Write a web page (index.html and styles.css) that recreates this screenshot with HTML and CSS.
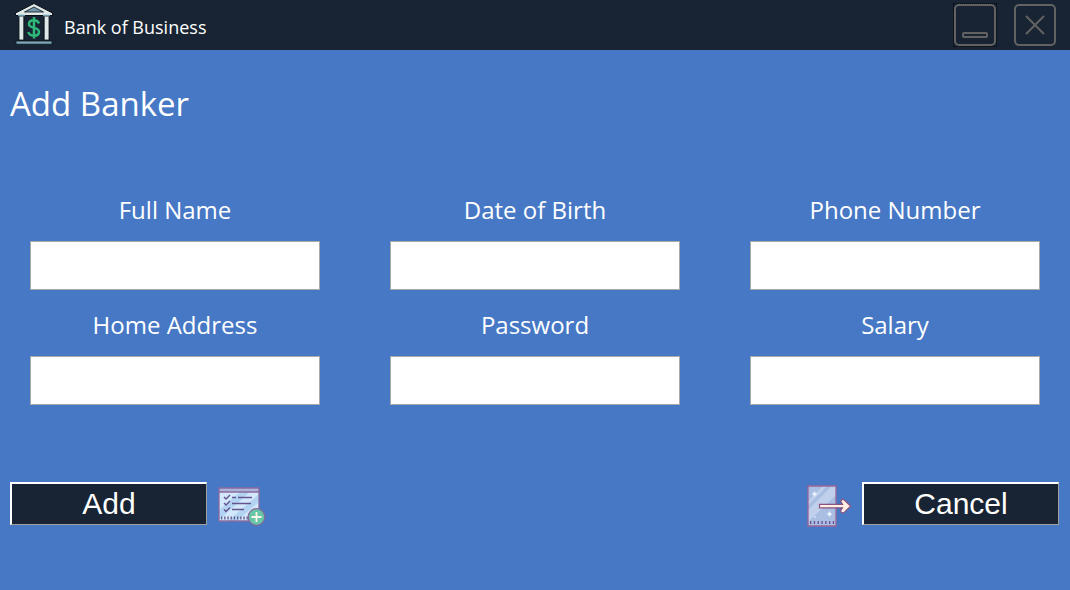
FILE: index.html
```html
<!DOCTYPE html>
<html lang="en">
<head>
<meta charset="utf-8">
<title>Bank of Business</title>
<link rel="stylesheet" href="styles.css">
</head>
<body>
<header class="titlebar">
  <svg class="logo" viewBox="14 3 40 44" aria-hidden="true">
    <path d="M34 3.500 15.500 13v2.500h37V13z" fill="#dfe9e8" stroke="#0a0f16"/>
    <path d="M34 7 24.500 12h19z" fill="#7296ae" stroke="#0a0f16" stroke-width=".8"/>
    <path d="M19 16h4.800v24H19zM44.200 16H49v24h-4.800z" fill="#dfe9e8" stroke="#0a0f16" stroke-width=".8"/>
    <path d="M18 15.500h7M43 15.500h7" stroke="#6e9db0" stroke-width="1.500"/>
    <path d="M16 41h36v3.200H16z" fill="#7fa9b9" stroke="#0a0f16" stroke-width=".8"/>
    <path d="M39 23.500c-1-2.500-3-3.200-5-3.200-3.200 0-5 1.500-5 3.800C29 29.200 39 26.500 39 31.700c0 2.500-2 4-5 4s-5-1.200-5.700-3.700M34 17v21.500" fill="none" stroke="#2fb878" stroke-width="2.500"/>
  </svg>
  <span class="app-name">Bank of Business</span>
  <div class="window-controls">
    <button class="window-button focused" type="button" aria-label="Minimize">
      <svg viewBox="0 0 42 42" aria-hidden="true"><rect x="1" y="1" width="40" height="40" rx="4"/><rect x="9" y="29" width="24" height="4" rx="1"/></svg>
    </button>
    <button class="window-button" type="button" aria-label="Close">
      <svg viewBox="0 0 42 42" aria-hidden="true"><rect x="1" y="1" width="40" height="40" rx="4"/><path d="m12 12 18 18M30 12 12 30"/></svg>
    </button>
  </div>
</header>
<main class="page">
  <h1 class="heading">Add Banker</h1>
  <form class="banker-form">
    <div class="fields">
      <div class="field"><label for="full-name">Full Name</label><input id="full-name" type="text"></div>
      <div class="field"><label for="birth">Date of Birth</label><input id="birth" type="text"></div>
      <div class="field"><label for="phone">Phone Number</label><input id="phone" type="tel"></div>
      <div class="field"><label for="address">Home Address</label><input id="address" type="text"></div>
      <div class="field"><label for="password">Password</label><input id="password" type="password"></div>
      <div class="field"><label for="salary">Salary</label><input id="salary" type="text"></div>
    </div>
    <div class="actions">
      <div class="action">
        <button class="button" type="submit">Add</button>
        <svg class="icon" viewBox="217 482 50 46" aria-hidden="true">
          <path d="M219 488h40v33h-40z" fill="#d3e9fb"/>
          <path d="m219 510 21-18h10l-31 28zM228 521l31-27v8l-22 19z" fill="#b3d3f2"/>
          <path d="M219 488h40v4h-40z" fill="#a9b5da"/>
          <path d="M219 488h40v33h-40zM219 492h40" fill="none" stroke="#8c6b9e" stroke-width="1.300"/>
          <path d="m224 497 2 2 4-4M224 503l2 2 4-4M224 509.500l2 2 4-4M232 497.500h4M238 497.500h14M232 503.500h19M232 509.500h12" fill="none" stroke="#65558f" stroke-width="1.400"/>
          <path d="M221 518h27" stroke="#65558f" stroke-width="3" stroke-dasharray="1.300 1.900"/>
          <circle cx="256.500" cy="517" r="8.300" fill="#68c5a7" stroke="#806b99" stroke-width="1.300"/>
          <path d="M251.500 517h10M256.500 512v10" stroke="#fff7e9" stroke-width="1.800"/>
        </svg>
      </div>
      <div class="action">
        <svg class="icon" viewBox="802 482 50 46" aria-hidden="true">
          <path d="M808 486h28v40h-28z" fill="#a9bee3"/>
          <path d="m808 510 24-24h4v9l-28 27zM808 501l15-15h4l-19 19z" fill="#bfcfec"/>
          <path d="M808 486h28v40h-28z" fill="none" stroke="#9b6598" stroke-width="1.300"/>
          <path d="M810 522.500h25" stroke="#6b4c8c" stroke-width="3" stroke-dasharray="1.300 2.500"/>
          <path d="m814.500 491 1 2 2 1-2 1-1 2-1-2-2-1 2-1zM829.500 511l1 2 2 1-2 1-1 2-1-2-2-1 2-1z" fill="#eef5ff"/>
          <circle cx="815" cy="517" r=".8" fill="#eef5ff"/>
          <path d="M819.500 504.300h23l-1.500-2.500c-.5-2 2-3.300 3.500-1.500l6 5.800-6 6c-2 1.700-4.500 0-3.500-2l1.500-2.300h-23z" fill="#fff1e6" stroke="#8d527f" stroke-width="1.200"/>
        </svg>
        <button class="button" type="button">Cancel</button>
      </div>
    </div>
  </form>
</main>
</body>
</html>
```
FILE: styles.css
```css
* {
  box-sizing: border-box;
}

body {
  margin: 0;
  min-height: 100vh;
  background: #4678c5;
  color: #fff;
  font-family: "Segoe UI", "Open Sans", sans-serif;
}

.titlebar {
  display: flex;
  align-items: center;
  height: 50px;
  padding: 0 14px;
  background: #182433;
}

.logo {
  width: 40px;
  height: 44px;
}

.app-name {
  margin-left: 10px;
  padding-top: 4px;
  font-size: 18px;
  line-height: 24px;
}

.window-controls {
  display: flex;
  gap: 18px;
  margin-left: auto;
}

.window-button {
  width: 42px;
  height: 42px;
  padding: 0;
  border: 0;
  background: none;
}

.window-button svg {
  display: block;
  fill: none;
  stroke: #626262;
  stroke-width: 2;
}

.focused {
  outline: 1px dotted #05080c;
}

.heading {
  margin: 0;
  padding: 30px 10px 0;
  font-size: 33px;
  font-weight: 400;
  line-height: 48px;
}

.fields {
  display: grid;
  grid-template-columns: repeat(3, 1fr);
  gap: 17px 70px;
  padding: 64px 30px 0;
}

.field {
  display: flex;
  flex-direction: column;
  gap: 13px;
}

.field label {
  font-size: 24px;
  line-height: 36px;
  text-align: center;
}

.field input {
  width: 100%;
  height: 49px;
  padding: 4px 8px;
  border: 1px solid #a9a9a9;
  border-radius: 0;
  background: #fff;
  font: inherit;
  font-size: 24px;
}

.actions {
  display: flex;
  justify-content: space-between;
  padding: 77px 11px 0 10px;
}

.action {
  display: flex;
  align-items: flex-start;
  gap: 10px;
}

.button {
  width: 197px;
  height: 43px;
  padding: 0;
  border: solid;
  border-width: 2px 1px 1px 2px;
  border-color: #fff #a0a0a0 #a0a0a0 #fff;
  background: #182433;
  color: #fff;
  font-family: "Liberation Sans", Arial, sans-serif;
  font-size: 30px;
  line-height: 36px;
}

.icon {
  width: 50px;
  height: 46px;
}
```
